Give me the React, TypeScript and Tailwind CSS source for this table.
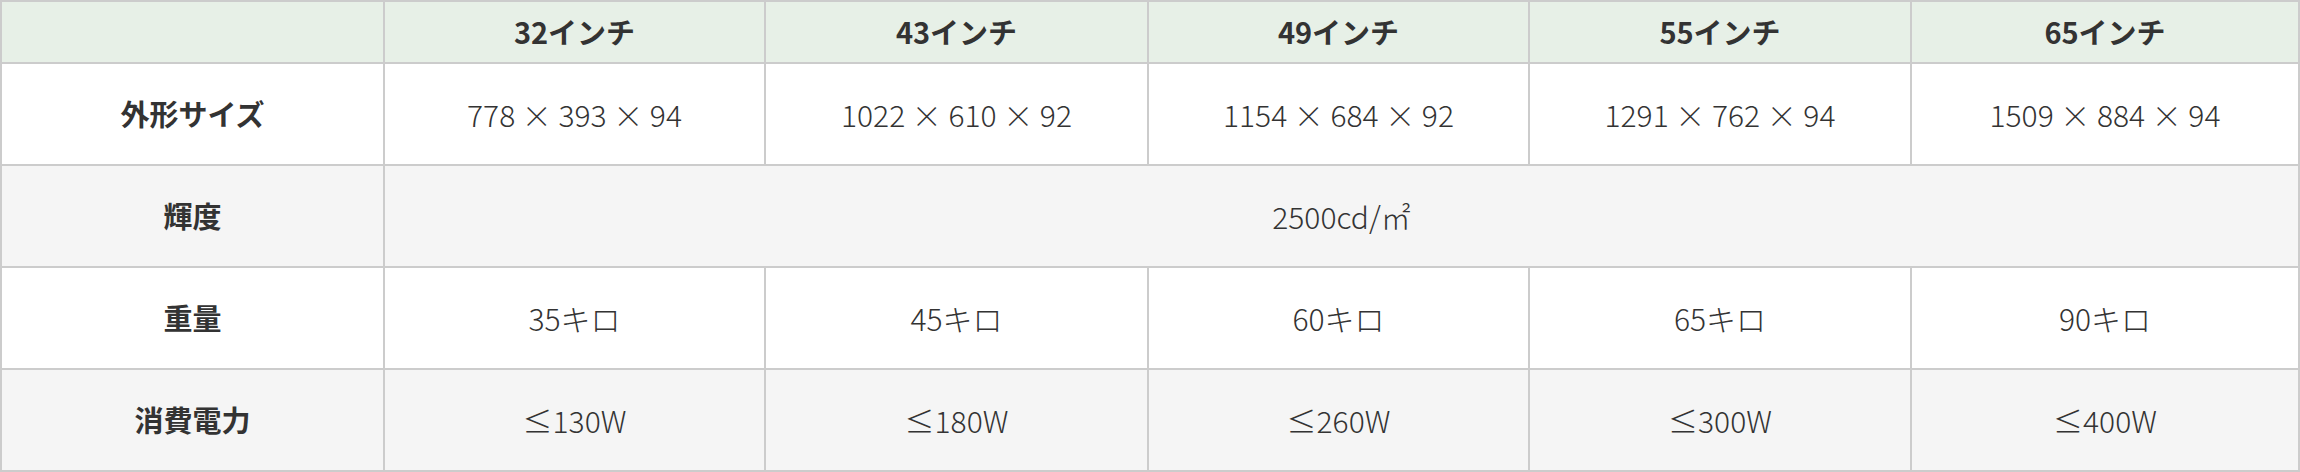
const sizes = ["32インチ", "43インチ", "49インチ", "55インチ", "65インチ"];

const rows: { label: string; values: string[]; span?: boolean; gray?: boolean }[] = [
  { label: "外形サイズ", values: ["778 × 393 × 94", "1022 × 610 × 92", "1154 × 684 × 92", "1291 × 762 × 94", "1509 × 884 × 94"] },
  { label: "輝度", values: ["2500cd/㎡"], span: true, gray: true },
  { label: "重量", values: ["35キロ", "45キロ", "60キロ", "65キロ", "90キロ"] },
  { label: "消費電力", values: ["≤130W", "≤180W", "≤260W", "≤300W", "≤400W"], gray: true },
];

export default function App() {
  return (
    <div className="w-[2300px] h-[472px] bg-white font-['Noto_Sans_CJK_JP',sans-serif] text-[#333]">
      <table className="w-full table-fixed border-collapse border-2 border-[#ccc]">
        <colgroup>
          <col className="w-[383px]" />
          <col className="w-[381px]" />
          <col className="w-[383px]" />
          <col className="w-[381px]" />
          <col className="w-[382px]" />
          <col />
        </colgroup>
        <thead>
          <tr className="h-[62px] bg-[#e7f0e7]">
            <th className="border-2 border-[#ccc] p-0"></th>
            {sizes.map((s) => (
              <th key={s} className="border-2 border-[#ccc] p-0 text-[29px] font-bold text-center">
                {s}
              </th>
            ))}
          </tr>
        </thead>
        <tbody>
          {rows.map((r) => (
            <tr key={r.label} className={r.gray ? "h-[102px] bg-[#f5f5f5]" : "h-[102px] bg-white"}>
              <td className="border-2 border-[#ccc] p-0 text-center text-[29px] font-bold">{r.label}</td>
              {r.span ? (
                <td colSpan={5} className="border-2 border-[#ccc] p-0 text-center text-[30px] font-light">
                  {r.values[0]}
                </td>
              ) : (
                r.values.map((v, i) => (
                  <td key={i} className="border-2 border-[#ccc] p-0 text-center text-[30px] font-light">
                    {v}
                  </td>
                ))
              )}
            </tr>
          ))}
        </tbody>
      </table>
    </div>
  );
}
